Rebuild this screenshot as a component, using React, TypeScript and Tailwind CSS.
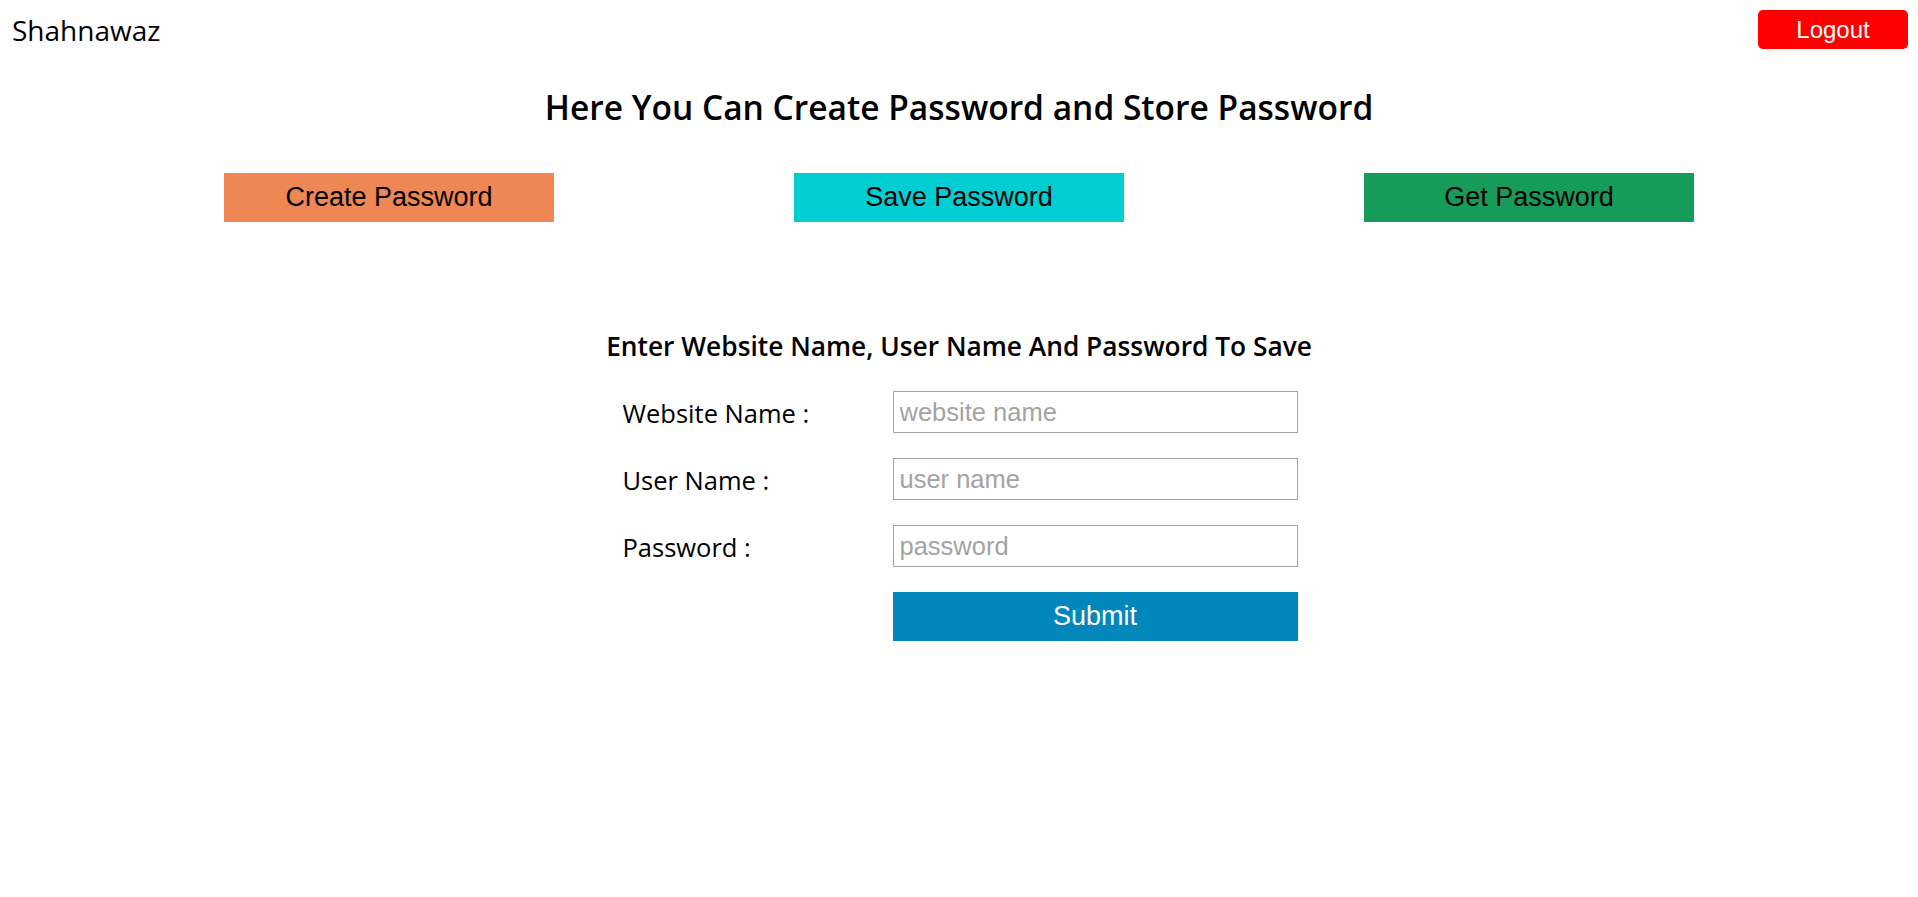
import React, { useState } from "react";

const uiFont = "font-['Open_Sans','Noto_Sans',sans-serif]";
const arial = "font-['Liberation_Sans',Arial,sans-serif]";

const tabs = [
  { label: "Create Password", color: "bg-[#ee8753]" },
  { label: "Save Password", color: "bg-[#00ced3]" },
  { label: "Get Password", color: "bg-[#169b59]" },
];

const fields = [
  { label: "Website Name :", placeholder: "website name", type: "text" },
  { label: "User Name :", placeholder: "user name", type: "text" },
  { label: "Password :", placeholder: "password", type: "password" },
];

export default function App() {
  const [values, setValues] = useState<string[]>(["", "", ""]);

  const update = (i: number, v: string) => {
    const next = values.slice();
    next[i] = v;
    setValues(next);
  };

  return (
    <div className={`min-h-screen bg-white text-black ${uiFont}`}>
      <header className="flex items-start justify-between pl-[12px] pr-[10px] pt-[10px]">
        <div className="mt-[-1px] text-[28px] leading-[42px]">Shahnawaz</div>
        <button
          type="button"
          className={`h-[39px] w-[150px] rounded-[5px] bg-[#ff0000] text-[24px] text-white ${arial}`}
        >
          Logout
        </button>
      </header>

      <h1 className="mt-[34px] text-center text-[33.5px] font-semibold leading-[44px]">
        Here You Can Create Password and Store Password
      </h1>

      <div className="mt-[44px] flex justify-center gap-[240px]">
        {tabs.map((t) => (
          <button
            key={t.label}
            type="button"
            className={`h-[49px] w-[330px] ${t.color} text-[27px] text-black ${arial}`}
          >
            {t.label}
          </button>
        ))}
      </div>

      <section className="mt-[104px] flex flex-col items-center">
        <h3 className="text-center text-[26.3px] font-semibold leading-[40px]">
          Enter Website Name, User Name And Password To Save
        </h3>

        <form
          className="mt-[25px] grid grid-cols-[270px_405px] gap-y-[25px] pl-[2px]"
          onSubmit={(e) => e.preventDefault()}
        >
          {fields.map((f, i) => (
            <React.Fragment key={f.label}>
              <label className="flex h-[42px] items-center pt-[3px] text-[25.5px]">
                {f.label}
              </label>
              <input
                type={f.type}
                value={values[i]}
                onChange={(e) => update(i, e.target.value)}
                placeholder={f.placeholder}
                className={`h-[42px] w-[405px] border border-[#a3a3a3] px-[6px] text-[25.5px] outline-none placeholder:text-[#a3a3a3] ${arial}`}
              />
            </React.Fragment>
          ))}
          <div />
          <button
            type="submit"
            className={`h-[49px] w-[405px] bg-[#0287bb] text-[27px] text-white ${arial}`}
          >
            Submit
          </button>
        </form>
      </section>
    </div>
  );
}
